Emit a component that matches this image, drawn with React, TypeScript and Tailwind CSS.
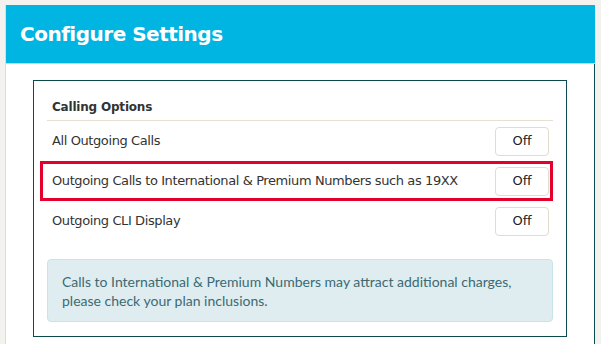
const rows = [
  { label: "All Outgoing Calls", highlight: false },
  { label: "Outgoing Calls to International & Premium Numbers such as 19XX", highlight: true },
  { label: "Outgoing CLI Display", highlight: false },
];

function OffButton() {
  return (
    <button className="w-[54px] h-[29px] shrink-0 border border-[#e3dccd] rounded-[4px] bg-white text-[13px] tracking-[-0.2px] text-[#222] flex items-center justify-center">
      Off
    </button>
  );
}

export default function App() {
  return (
    <div className="w-[601px] h-[344px] overflow-hidden bg-[#f4f2ee] pt-[5px] pl-[5px] font-['DejaVu_Sans',sans-serif]">
      <div className="w-[590px] h-[339px] bg-white border-l border-l-[#dcdcdc] border-r border-r-[#0b4a4f] flex flex-col">
        <div className="h-[59px] shrink-0 bg-[#00b5e2] border-b border-b-[#d6d2c4] flex items-center pl-[14px] -mr-px">
          <h1 className="text-white font-bold text-[20px] tracking-[-0.5px] leading-none">Configure Settings</h1>
        </div>
        <div className="pt-[16px] pl-[27px]">
          <div className="w-[534px] border border-[#0b4a4f] px-[13px] pt-[17px] pb-[14px]">
            <div className="border-b border-b-[#e6e0d3] pl-[5px] pb-[4px]">
              <h2 className="text-[12px] tracking-[-0.2px] leading-[18px] font-bold text-[#333]">Calling Options</h2>
            </div>
            <div className="flex flex-col">
              {rows.map((r) => (
                <div
                  key={r.label}
                  className={
                    r.highlight
                      ? "h-[40px] flex items-center justify-between border-[3px] border-[#e4002b] -ml-[7px] pl-[9px] pr-[1px]"
                      : "h-[40px] flex items-center justify-between pl-[5px] pr-[4px]"
                  }
                >
                  <span className="text-[13px] tracking-[-0.4px] text-[#333]">{r.label}</span>
                  <OffButton />
                </div>
              ))}
            </div>
            <div className="mt-[18px] bg-[#dfedf0] border border-[#c8e4ea] rounded-[4px] pl-[14px] pr-[14px] pt-[12px] pb-[11px] text-[14px] leading-[19px] text-[#3b6a73] font-['Lato',sans-serif]">
              Calls to International &amp; Premium Numbers may attract additional charges, please check your plan inclusions.
            </div>
          </div>
        </div>
      </div>
    </div>
  );
}
